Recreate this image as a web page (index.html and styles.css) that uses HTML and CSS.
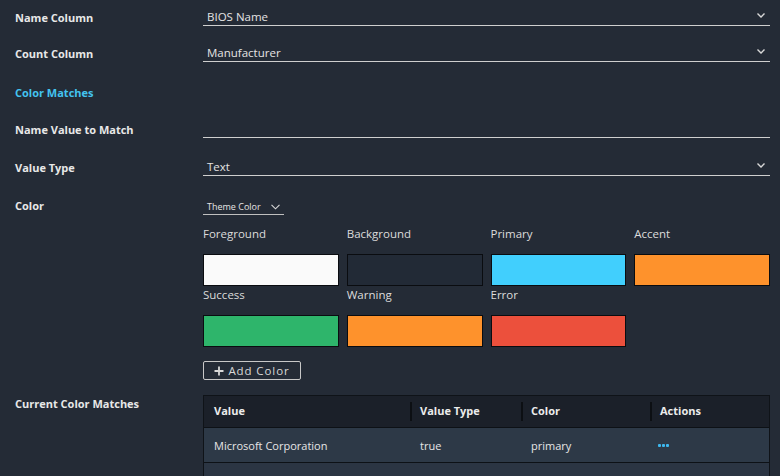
FILE: index.html
```html
<!DOCTYPE html>
<html>
<head>
<meta charset="utf-8">
<link rel="stylesheet" href="styles.css">
</head>
<body>
<div class="form">
  <div class="row">
    <div class="label">Name Column</div>
    <div class="control select"><span>BIOS Name</span><svg class="chev" width="8" height="5" viewBox="0 0 8 5"><path d="M0.5 0.5 L4 4 L7.5 0.5" fill="none" stroke="#d8d8d8" stroke-width="1.4"/></svg></div>
  </div>
  <div class="row">
    <div class="label">Count Column</div>
    <div class="control select"><span>Manufacturer</span><svg class="chev" width="8" height="5" viewBox="0 0 8 5"><path d="M0.5 0.5 L4 4 L7.5 0.5" fill="none" stroke="#d8d8d8" stroke-width="1.4"/></svg></div>
  </div>
  <div class="row">
    <div class="label section">Color Matches</div>
  </div>
  <div class="row">
    <div class="label">Name Value to Match</div>
    <div class="control input"></div>
  </div>
  <div class="row">
    <div class="label">Value Type</div>
    <div class="control select"><span>Text</span><svg class="chev" width="8" height="5" viewBox="0 0 8 5"><path d="M0.5 0.5 L4 4 L7.5 0.5" fill="none" stroke="#d8d8d8" stroke-width="1.4"/></svg></div>
  </div>
  <div class="row">
    <div class="label">Color</div>
    <div class="theme-select"><span>Theme Color</span><svg width="9" height="6" viewBox="0 0 9 6"><path d="M0.5 0.8 L4.5 4.8 L8.5 0.8" fill="none" stroke="#d8d8d8" stroke-width="1.1"/></svg></div>
  </div>
  <div class="sub">
    <div class="swatches">
      <div class="cell"><div class="sw-label">Foreground</div><div class="sw fg"></div></div>
      <div class="cell"><div class="sw-label">Background</div><div class="sw bg"></div></div>
      <div class="cell"><div class="sw-label">Primary</div><div class="sw primary"></div></div>
      <div class="cell"><div class="sw-label">Accent</div><div class="sw accent"></div></div>
      <div class="cell"><div class="sw-label">Success</div><div class="sw success"></div></div>
      <div class="cell"><div class="sw-label">Warning</div><div class="sw warning"></div></div>
      <div class="cell"><div class="sw-label">Error</div><div class="sw error"></div></div>
    </div>
    <button class="add"><svg width="10" height="10" viewBox="0 0 10 10"><path d="M5 0.5 V9.5 M0.5 5 H9.5" stroke="#d8d8d8" stroke-width="1.8"/></svg><span>Add Color</span></button>
  </div>
  <div class="row-top">
    <div class="label">Current Color Matches</div>
    <div class="table">
      <div class="thead">
        <div class="th c1">Value</div>
        <div class="th c2">Value Type</div>
        <div class="th c3">Color</div>
        <div class="th c4">Actions</div>
      </div>
      <div class="tr">
        <div class="td c1">Microsoft Corporation</div>
        <div class="td c2">true</div>
        <div class="td c3">primary</div>
        <div class="td c4"><span class="dots"><i></i><i></i><i></i></span></div>
      </div>
      <div class="tr empty"></div>
    </div>
  </div>
</div>
</body>
</html>
```
FILE: styles.css
```css
*, *::before, *::after {
  box-sizing: border-box;
}
html, body {
  margin: 0;
  padding: 0;
  background: #242b36;
  height: 100%;
  overflow: hidden;
}
body {
  font-family: "Open Sans", "Liberation Sans", sans-serif;
  color: #e6e6e6;
}
.form {
  padding: 0 10px 0 15px;
}
.row {
  display: flex;
  align-items: center;
  height: 38px;
}
.row:first-child {
  height: 34px;
}
.label {
  width: 188px;
  flex: none;
  font-size: 11px;
  font-weight: 700;
  color: #e8e8e8;
}
.label.section {
  color: #43c3ef;
  margin-top: 2px;
}
.control {
  flex: 1;
  height: 17px;
  border-bottom: 1px solid #cfcfcf;
  display: flex;
  align-items: center;
  justify-content: space-between;
  padding: 0 5px 1px 4px;
  margin-top: 0;
}
.control span {
  font-size: 11.5px;
  color: #e4e4e4;
}
.chev {
  margin-top: -2px;
}
.theme-select {
  width: 81px;
  height: 16px;
  border-bottom: 1px solid #bfbfbf;
  display: flex;
  align-items: center;
  justify-content: space-between;
  padding: 1px 4px 0 4px;
  margin-top: 3px;
}
.theme-select span {
  font-size: 9px;
  color: #e4e4e4;
}
.sub {
  padding-left: 188px;
  padding-top: 2px;
}
.swatches {
  display: grid;
  grid-template-columns: repeat(4, 1fr);
  column-gap: 8px;
  row-gap: 1px;
}
.sw-label {
  font-size: 11.5px;
  line-height: 16px;
  color: #dcdcdc;
  margin-bottom: 12px;
}
.sw {
  height: 32px;
  border: 1px solid #0a0c10;
}
.fg { background: #fafafa; }
.bg { background: #222a36; }
.primary { background: #41cffd; }
.accent { background: #fe922c; }
.success { background: #2eb56b; }
.warning { background: #fe922c; }
.error { background: #ec503c; }
.add {
  margin-top: 14px;
  width: 98px;
  height: 19px;
  border: 1px solid #c8c8c8;
  border-radius: 2px;
  background: transparent;
  color: #d8d8d8;
  font-family: "Open Sans", "Liberation Sans", sans-serif;
  font-size: 11.5px;
  letter-spacing: 0.9px;
  display: flex;
  align-items: center;
  justify-content: center;
  gap: 4px;
  padding: 0;
}
.row-top {
  display: flex;
  align-items: flex-start;
  margin-top: 15px;
}
.row-top .label {
  padding-top: 1px;
}
.table {
  flex: 1;
  border: 1px solid #0f1318;
  border-bottom: none;
}
.thead {
  display: flex;
  height: 32px;
  background: #1b2029;
  border-bottom: 1px solid #0d1116;
}
.th {
  font-size: 11px;
  font-weight: 700;
  color: #ececec;
  display: flex;
  align-items: center;
  padding-left: 10px;
  padding-bottom: 3px;
  position: relative;
}
.th + .th::before {
  content: "";
  position: absolute;
  left: 0;
  top: 6px;
  bottom: 6px;
  width: 2px;
  background: #0c0f13;
}
.c1 { width: 206px; }
.c2 { width: 111px; }
.c3 { width: 129px; }
.c4 { flex: 1; }
.tr {
  display: flex;
  height: 35px;
  background: #2d3947;
  border-bottom: 1px solid #0d1116;
}
.tr.empty {
  height: 40px;
  background: #2b3543;
  border-bottom: none;
}
.td {
  font-size: 11px;
  color: #e6e6e6;
  display: flex;
  align-items: center;
  padding-left: 10px;
}
.c4.td {
  padding-left: 8px;
}
.dots {
  display: flex;
  gap: 1px;
}
.dots i {
  display: block;
  width: 3px;
  height: 3px;
  background: #3db8ef;
  border-radius: 1px;
}
```
